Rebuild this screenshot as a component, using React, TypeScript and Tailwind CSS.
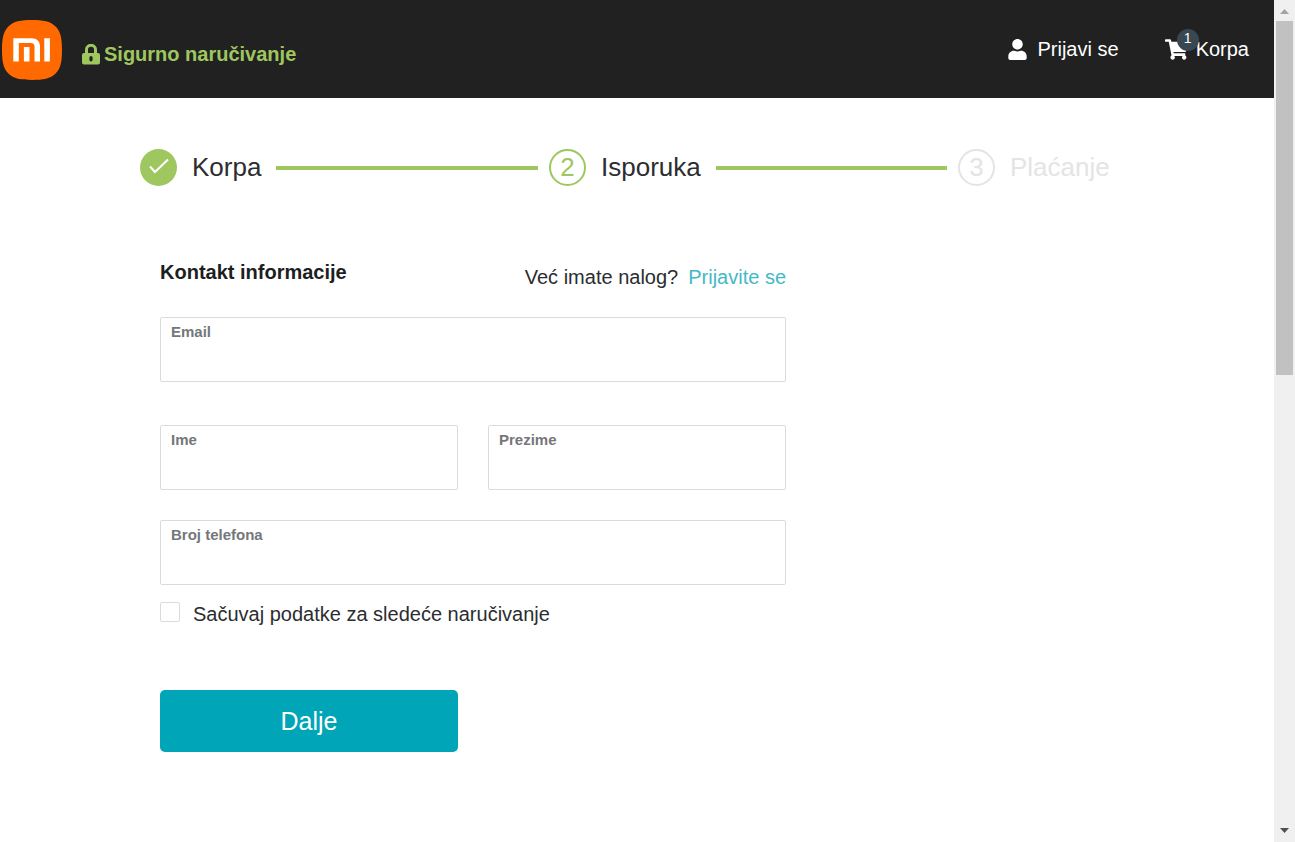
import React from "react";
import { FaShoppingCart, FaUser } from "react-icons/fa";

function Logo() {
  return (
    <svg viewBox="0 0 60 60" className="size-15" role="img" aria-label="Mi">
      <path
        d="M30 0C41 0 48.500 1.200 53.600 6.400C58.800 11.500 60 19 60 30C60 41 58.800 48.500 53.600 53.600C48.500 58.800 41 60 30 60C19 60 11.500 58.800 6.400 53.600C1.200 48.500 0 41 0 30C0 19 1.200 11.500 6.400 6.400C11.500 1.200 19 0 30 0Z"
        fill="#ff6900"
      />
      <path
        d="M11.300 18.300H29.500C35 18.300 38 21.300 38 26.500V41.500H32.500V26.500C32.500 24.300 31.300 23 29 23H16.800V41.500H11.300ZM21.900 27H27.500V41.500H21.900ZM42.300 18.300H47.900V41.500H42.300Z"
        fill="#fff"
      />
    </svg>
  );
}

function LockIcon() {
  return (
    <svg viewBox="0 0 18 21" className="h-[21px] w-[18px]" aria-hidden="true">
      <path d="M4.500 10V5.500a4.500 4.200 0 0 1 9 0V10" fill="none" stroke="currentColor" strokeWidth="3" />
      <path
        fillRule="evenodd"
        fill="currentColor"
        d="M2 9H16a2 2 0 0 1 2 2V18.500a2 2 0 0 1 -2 2H2a2 2 0 0 1 -2 -2V11a2 2 0 0 1 2 -2ZM9 12a1.600 1.600 0 0 0 -1.600 1.600V15.800a1.600 1.600 0 0 0 3.200 0V13.600a1.600 1.600 0 0 0 -1.600 -1.600Z"
      />
    </svg>
  );
}

function Header() {
  return (
    <header className="flex h-[98px] items-center justify-between bg-[#212121] pr-[25px] pl-0.5 text-xl text-white">
      <div className="flex items-center gap-5 pt-0.5">
        <Logo />
        <p className="flex items-center gap-1 pt-2 font-bold text-[#9fc75f]">
          <LockIcon />
          Sigurno naručivanje
        </p>
      </div>
      <nav className="flex items-center gap-[46px]">
        <a href="#prijava" className="flex items-center gap-2.5">
          <FaUser className="h-[21px] w-[19px]" aria-hidden="true" />
          Prijavi se
        </a>
        <a href="#korpa" className="flex items-center gap-2">
          <span className="relative">
            <FaShoppingCart className="h-[21px] w-[23px]" aria-hidden="true" />
            <span className="absolute -top-2.5 left-3 flex size-[22px] items-center justify-center rounded-full bg-[#394752] pb-1 text-sm">
              1
            </span>
          </span>
          Korpa
        </a>
      </nav>
    </header>
  );
}

function Steps() {
  return (
    <ol className="flex text-[26px] leading-10 text-[#2b2d30]">
      <li className="flex flex-1 items-center gap-[15px] pr-[11px]">
        <span className="flex size-[37px] items-center justify-center rounded-full bg-[#9fc75f]">
          <svg viewBox="0 0 20 18" className="h-[18px] w-5" fill="none" stroke="#fff" strokeWidth="2" aria-hidden="true">
            <path d="M1 8.500L6 14L19 1.500" />
          </svg>
        </span>
        <span>Korpa</span>
        <span className="mt-0.5 h-1 flex-1 bg-[#9fc75f]" />
      </li>
      <li className="flex flex-1 items-center gap-[15px] pr-[11px]" aria-current="step">
        <span className="flex size-[37px] items-center justify-center rounded-full border-2 border-[#9fc75f] text-[#9fc75f]">
          2
        </span>
        <span>Isporuka</span>
        <span className="mt-0.5 h-1 flex-1 bg-[#9fc75f]" />
      </li>
      <li className="flex w-44 items-center gap-[15px] text-[#e4e4e4]">
        <span className="flex size-[37px] items-center justify-center rounded-full border-2 border-[#e4e4e4]">3</span>
        <span>Plaćanje</span>
      </li>
    </ol>
  );
}

type FieldProps = { id: string; label: string; type?: string };

function Field({ id, label, type = "text" }: FieldProps) {
  return (
    <div className="flex h-[65px] flex-col rounded-xs border border-[#dadbdd] px-2.5 pt-1 focus-within:border-[#00a5b7]">
      <label htmlFor={id} className="text-[15px] leading-5 font-bold text-[#75777a]">
        {label}
      </label>
      <input id={id} name={id} type={type} className="w-full min-w-0 flex-1 bg-transparent text-xl outline-none" />
    </div>
  );
}

function ContactForm() {
  return (
    <form className="ml-5 max-w-[626px] text-xl text-[#2b2d30]" onSubmit={(e) => e.preventDefault()}>
      <div className="flex justify-between">
        <h2 className="font-bold text-[#1c1e21]">Kontakt informacije</h2>
        <p className="flex gap-2.5 pt-[5px]">
          Već imate nalog?
          <a href="#prijava" className="text-[#45b8c7]">
            Prijavite se
          </a>
        </p>
      </div>
      <div className="mt-[26px]">
        <Field id="email" label="Email" type="email" />
      </div>
      <div className="mt-[43px] grid grid-cols-2 gap-[30px]">
        <Field id="ime" label="Ime" />
        <Field id="prezime" label="Prezime" />
      </div>
      <div className="mt-[30px]">
        <Field id="telefon" label="Broj telefona" type="tel" />
      </div>
      <div className="mt-[15px] flex items-center gap-[13px]">
        <input
          id="sacuvaj"
          type="checkbox"
          className="mb-1 size-5 appearance-none rounded-xs border border-[#dadbdd] checked:bg-[#00a5b7]"
        />
        <label htmlFor="sacuvaj">Sačuvaj podatke za sledeće naručivanje</label>
      </div>
      <button type="submit" className="mt-[62px] h-[62px] w-[298px] rounded-[5px] bg-[#00a5b7] text-[25px] text-white">
        Dalje
      </button>
    </form>
  );
}

function Scrollbar() {
  return (
    <div className="flex w-[21px] shrink-0 flex-col items-center bg-[#f0f0f0]" aria-hidden="true">
      <svg viewBox="0 0 21 21" className="h-[21px] w-full" fill="#a3a3a3">
        <path d="M6 14L10.500 9L15 14Z" />
      </svg>
      <div className="flex w-full flex-1 flex-col px-0.5">
        <div className="h-[44.25%] bg-[#c1c1c1]" />
      </div>
      <svg viewBox="0 0 21 21" className="h-[21px] w-full" fill="#505050">
        <path d="M6 7L10.500 12L15 7Z" />
      </svg>
    </div>
  );
}

export default function App() {
  return (
    <div className="flex h-screen bg-white font-['Liberation_Sans',Arial,sans-serif]">
      <div className="min-w-0 flex-1 overflow-hidden">
        <Header />
        <main className="mx-auto flex max-w-[994px] flex-col gap-[71px] pt-[49px]">
          <Steps />
          <ContactForm />
        </main>
      </div>
      <Scrollbar />
    </div>
  );
}
